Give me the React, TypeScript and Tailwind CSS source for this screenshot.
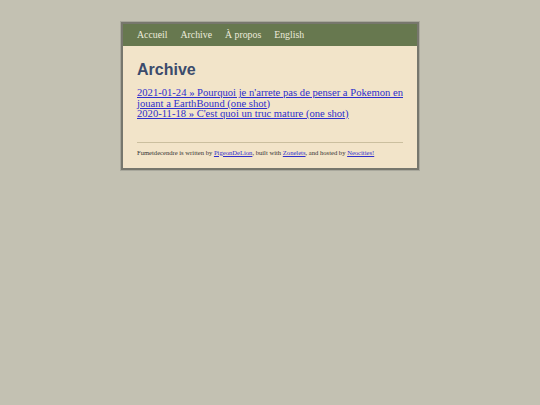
export default function App() {
  const serif = { fontFamily: '"Liberation Serif", "DejaVu Serif", serif' };
  return (
    <div className="min-h-[405px] w-full bg-[#c3c1b2] pt-[22px]" style={serif}>
      <div className="mx-auto w-[298px] border-2 border-[#77776d] bg-[#f2e4c9] shadow-[0_0_0_1px_#a9a89c]">
        <nav className="flex h-[22px] items-center gap-[13px] bg-[#67784f] px-[14px] text-[9.8px] text-[#ecebdc]">
          <span>Accueil</span>
          <span>Archive</span>
          <span>À propos</span>
          <span>English</span>
        </nav>
        <main className="px-[14px] pb-[10px] pt-[14px]">
          <h1
            className="text-[16px] font-bold leading-[20px] text-[#3b4b6c]"
            style={{ fontFamily: '"Liberation Sans", Arial, sans-serif' }}
          >
            Archive
          </h1>
          <ul className="mt-[8px] text-justify text-[10.6px] leading-[10.5px] text-[#2d2dcc]">
            <li>
              <a href="#" className="underline">
                2021-01-24 » Pourquoi je n'arrete pas de penser a Pokemon en jouant a EarthBound (one shot)
              </a>
            </li>
            <li>
              <a href="#" className="underline">
                2020-11-18 » C'est quoi un truc mature (one shot)
              </a>
            </li>
          </ul>
          <hr className="mt-[22px] border-t border-[#cbbf9f]" />
          <p className="mt-[5px] text-[6.6px] leading-[10px] text-[#333]">
            Fumetdecendre is written by{" "}
            <a href="#" className="text-[#2d2dcc] underline">PigeonDeLion</a>, built with{" "}
            <a href="#" className="text-[#2d2dcc] underline">Zonelets</a>, and hosted by{" "}
            <a href="#" className="text-[#2d2dcc] underline">Neocities!</a>
          </p>
        </main>
      </div>
    </div>
  );
}
